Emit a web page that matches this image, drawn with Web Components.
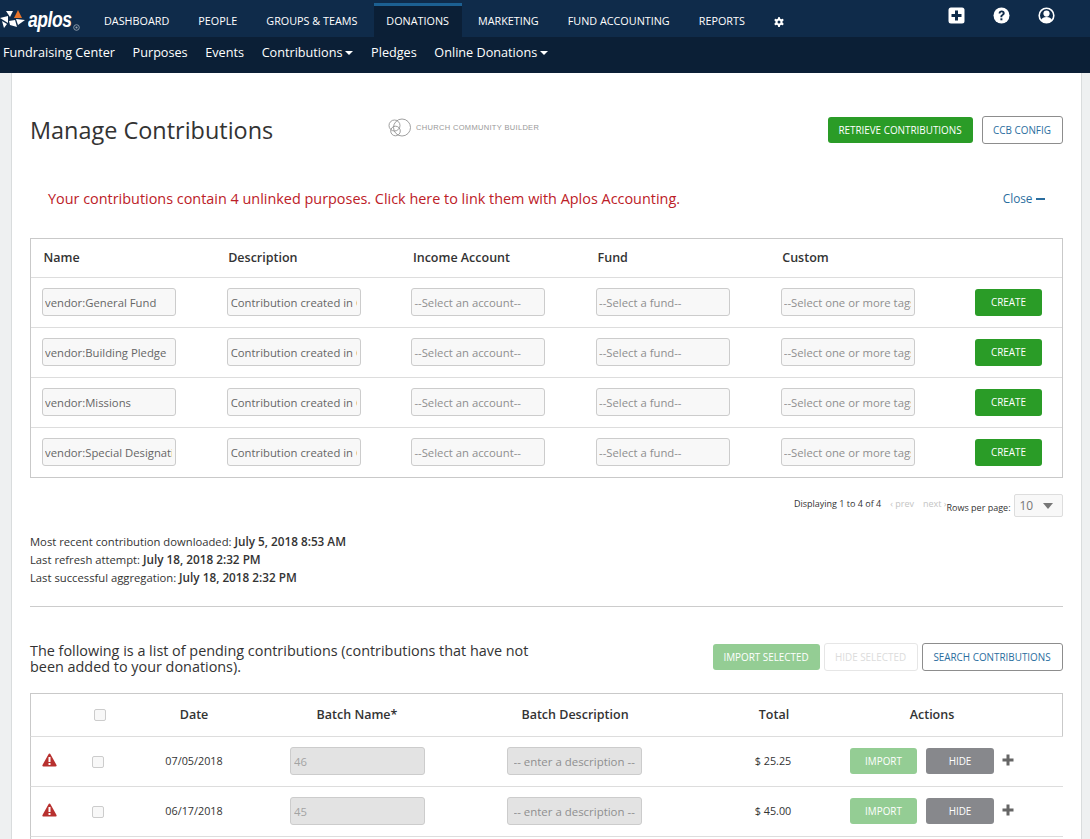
<!DOCTYPE html>
<html lang="en"><head><meta charset="utf-8"><title>Manage Contributions</title>
<style>
html,body{margin:0;padding:0;background:#eef0f1;font-family:"Open Sans",sans-serif;color:#333;height:839px;overflow:hidden}
</style></head><body>
<top-nav></top-nav>
<sub-nav></sub-nav>
<page-card>
  <page-header></page-header>
  <link-alert></link-alert>
  <purpose-table></purpose-table>
  <table-pager></table-pager>
  <sync-info></sync-info>
  <pending-section></pending-section>
</page-card>
<script>
const def=(name,html)=>customElements.define(name,class extends HTMLElement{
  constructor(){super();this.attachShadow({mode:'open'});if(typeof html!=='function')this.shadowRoot.innerHTML=html;}
  connectedCallback(){ if(typeof html==='function'){this.shadowRoot.innerHTML=html(this);} }
});
const attr=(e,n,d='')=>e.getAttribute(n)??d;

def('ui-btn',`<style>
:host{display:inline-flex;box-sizing:border-box;align-items:center;justify-content:center;padding-top:1px;font:400 9.9px/1 "Open Sans",sans-serif;border-radius:3px;white-space:nowrap;text-transform:uppercase}
:host([kind=green]){background:#2a9c27;color:#fff}
:host([kind=pale]){background:#94cd94;color:#fff}
:host([kind=gray]){background:#87888c;color:#fff}
:host([kind=outline]){background:#fff;color:#2a6d9e;border:1px solid #8d8d8d}
:host([kind=ghost]){background:#fff;color:#dcdcdc;border:1px solid #e6e6e6}
</style><slot></slot>`);

def('ui-field',`<style>
:host{display:block;box-sizing:border-box;width:134px;height:28px;border:1px solid #ccc;border-radius:3px;background:#f8f8f8;padding:1px 3px 0 2px;font:400 11.3px/25px "Open Sans",sans-serif;color:#666}
:host([muted]){color:#8f8f8f}
:host([off]){background:#e3e3e3;color:#a3a3a3;padding-left:3px}
div{overflow:hidden;white-space:nowrap}
</style><div><slot></slot></div>`);

def('nav-item',`<style>
:host{display:flex;align-items:center;height:37px;padding:6px 14.5px 0;box-sizing:border-box;font:400 10.8px/1 "Open Sans",sans-serif;color:#fff;text-transform:uppercase;white-space:nowrap}
:host([active]){background:#0b1f36;box-shadow:inset 0 3px 0 #1c6092;margin:3px 1.5px 0 2.5px;height:34px;padding:3px 13px 0 12px}
</style><slot></slot>`);

def('top-nav',`<style>
:host{display:flex;height:37px;background:#0f2b4a;align-items:flex-start;position:relative}
.logo{display:flex;align-items:flex-start;width:89.5px;height:37px;flex:none;color:#fff;position:relative}
.logo>svg:first-child{margin-top:9px;flex:none}
.word{display:inline-block;font:italic 700 22px/1 "Liberation Sans",sans-serif;letter-spacing:-.6px;margin-left:3px;margin-top:9px;transform:scaleX(.8);transform-origin:0 0}
.r{position:absolute;left:73px;top:24px}
.gear{display:flex;align-items:center;height:37px;padding-top:6px;box-sizing:border-box;margin-left:15px}
.right{margin-left:auto;display:flex;gap:28px;padding:7px 35px 0 0}
svg{display:block}
</style>
<div class="logo">
<svg width="25" height="20" viewBox="0 0 25 20">
<path d="M6 2h7l-3 6z" fill="#fff"/><path d="M18 1l4 8h-8z" fill="#e8742a"/><path d="M0 9l8-2v7z" fill="#fff"/><path d="M16 10l9 1-7 5z" fill="#fff"/><path d="M9 12l6-1 2 7-7-2z" fill="#fff"/><path d="M2 12l5 3-3 4z" fill="#fff"/>
</svg>
<span class="word">aplos</span>
<svg class="r" width="7" height="7" viewBox="0 0 8 8"><circle cx="4" cy="4" r="3.2" fill="none" stroke="#9aa6b3" stroke-width="1"/><circle cx="4" cy="4" r="1.2" fill="#9aa6b3"/></svg>
</div>
<nav-item>Dashboard</nav-item><nav-item>People</nav-item><nav-item>Groups &amp; Teams</nav-item><nav-item active>Donations</nav-item><nav-item>Marketing</nav-item><nav-item>Fund Accounting</nav-item><nav-item>Reports</nav-item>
<span class="gear"><svg width="10" height="10" viewBox="0 0 10 10"><g fill="#fff"><circle cx="5" cy="5" r="3.6"/><rect x="4" y="0" width="2" height="10" rx=".4"/><rect x="4" y="0" width="2" height="10" rx=".4" transform="rotate(60 5 5)"/><rect x="4" y="0" width="2" height="10" rx=".4" transform="rotate(120 5 5)"/></g><circle cx="5" cy="5" r="1.5" fill="#0f2b4a"/></svg></span>
<div class="right">
<svg width="17" height="17" viewBox="0 0 17 17"><rect x=".5" y=".5" width="16" height="16" rx="2.5" fill="#fff"/><path d="M7 3.5h3V7h3.5v3H10v3.5H7V10H3.5V7H7z" fill="#0f2b4a"/></svg>
<svg width="17" height="17" viewBox="0 0 17 17"><circle cx="8.5" cy="8.5" r="8" fill="#fff"/><path d="M5.6 6.4C5.8 4.6 7 3.6 8.7 3.6c1.8 0 3 1.1 3 2.6 0 1.3-.8 1.9-1.6 2.4-.6.4-.8.7-.8 1.3v.3H7.4v-.5c0-1.1.5-1.7 1.3-2.2.6-.4 1-.7 1-1.3 0-.6-.4-1-1.1-1-.7 0-1.1.4-1.2 1.2z" fill="#0f2b4a"/><rect x="7.4" y="11.3" width="2" height="2" fill="#0f2b4a"/></svg>
<svg width="17" height="17" viewBox="0 0 17 17"><circle cx="8.5" cy="8.5" r="7.3" fill="#0f2b4a" stroke="#fff" stroke-width="1.6"/><circle cx="8.5" cy="6.6" r="3.1" fill="#fff"/><path d="M3 13.2c.8-2.4 2.8-3.2 5.5-3.2s4.7.8 5.5 3.2c-1.3 1.6-3.3 2.6-5.5 2.6S4.3 14.8 3 13.2z" fill="#fff"/></svg>
</div>`);

def('sub-item',`<style>
:host{font:400 12.66px/30px "Open Sans",sans-serif;color:#fff;white-space:nowrap;display:inline-flex;align-items:center;height:30px}
:host([caret])::after{content:"";margin-left:3px;margin-top:1px;border-top:4px solid #fff;border-left:4px solid transparent;border-right:4px solid transparent}
</style><slot></slot>`);

def('sub-nav',`<style>
:host{display:flex;height:36px;background:#0b1f36;gap:17.6px;padding-left:3px;box-sizing:border-box}
</style>
<sub-item>Fundraising Center</sub-item><sub-item>Purposes</sub-item><sub-item>Events</sub-item><sub-item caret>Contributions</sub-item><sub-item>Pledges</sub-item><sub-item caret>Online Donations</sub-item>`);

def('page-card',`<style>
:host{display:block;box-sizing:border-box;margin:0 8.5px 0 11px;height:766px;overflow:hidden;background:#fff;border-left:1px solid #d9dcdd;border-right:1px solid #d9dcdd;padding:28px 18px 0}
</style><slot></slot>`);

def('page-header',`<style>
:host{display:flex;align-items:center;height:58px;position:relative}
h1{font:400 23.45px/1 "Open Sans",sans-serif;color:#333;margin:0;width:358px;flex:none;position:relative;top:1px}
.ccb{display:flex;align-items:center;gap:4px;font:400 7.5px/1 "Liberation Sans",sans-serif;color:#999;letter-spacing:.33px;text-transform:uppercase;margin-top:-4px;white-space:nowrap}
.btns{margin-left:auto;display:flex;align-items:center;gap:9px}
</style>
<h1>Manage Contributions</h1>
<div class="ccb"><svg width="24" height="20" viewBox="0 0 24 20" fill="none" stroke="#888" stroke-width=".8"><circle cx="6.5" cy="7.5" r="5.5"/><circle cx="14" cy="9.5" r="8.5"/><circle cx="7.5" cy="13" r="4.8"/></svg>Church Community Builder</div>
<div class="btns"><ui-btn kind="green" style="width:145px;height:26px">Retrieve Contributions</ui-btn><ui-btn kind="outline" style="width:81px;height:28px">CCB Config</ui-btn></div>`);

def('link-alert',`<style>
:host{display:flex;align-items:center;justify-content:space-between;height:38px;margin-top:21px;padding:0 18px;font:400 14.42px/1 "Open Sans",sans-serif;color:#bc2027}
.close{font-size:11.8px;color:#2a6d9e;display:flex;align-items:center;gap:3px}
.close i{display:block;width:9px;height:2.5px;background:#2a6d9e}
</style>
<span>Your contributions contain 4 unlinked purposes. Click here to link them with Aplos Accounting.</span><span class="close">Close<i></i></span>`);

def('purpose-row',e=>`<style>
:host{display:grid;grid-template-columns:repeat(5,184.7px) 1fr;height:50px;align-items:center;border-top:1px solid #ddd;box-sizing:border-box;padding-left:11px}
ui-field{margin-bottom:2px}
ui-btn{width:67px;height:27px;margin-left:9.5px}
</style>
<ui-field>${attr(e,'name')}</ui-field>
<ui-field style="padding-left:3px">Contribution created in CCB</ui-field>
<ui-field muted>--Select an account--</ui-field>
<ui-field muted>--Select a fund--</ui-field>
<ui-field muted>--Select one or more tags--</ui-field>
<ui-btn kind="green">Create</ui-btn>`);

def('purpose-table',`<style>
:host{display:block;border:1px solid #c9c9c9;margin-top:20px;box-sizing:border-box;height:240px}
.h{display:grid;grid-template-columns:repeat(5,184.7px) 1fr;height:38px;align-items:center;padding-left:12.5px;font:600 12.5px/1 "Open Sans",sans-serif;color:#333}
</style>
<div class="h"><span>Name</span><span>Description</span><span>Income Account</span><span>Fund</span><span>Custom</span><span></span></div>
<purpose-row name="vendor:General Fund"></purpose-row>
<purpose-row name="vendor:Building Pledge"></purpose-row>
<purpose-row name="vendor:Missions"></purpose-row>
<purpose-row name="vendor:Special Designation"></purpose-row>`);

def('table-pager',`<style>
:host{display:flex;justify-content:flex-end;align-items:flex-start;height:24px;margin-top:16px;font:400 9px/1 "Open Sans",sans-serif;color:#333;white-space:nowrap}
.t{margin-top:5px}
.p{margin:5px 0 0 9px;color:#c4c4c4}
.r{margin:9px 3px 0 0}
.s{box-sizing:border-box;width:49px;height:23px;border:1px solid #ddd;border-radius:2px;background:#f8f8f8;display:flex;align-items:center;justify-content:space-between;padding:0 9px 0 5px;font-size:12px;color:#777}
.s i{border-top:6px solid #777;border-left:5.5px solid transparent;border-right:5.5px solid transparent}
</style>
<span class="t">Displaying 1 to 4 of 4</span><span class="p">‹ prev</span><span class="p" style="margin-right:0">next ›</span><span class="r">Rows per page:</span><span class="s">10<i></i></span>`);

def('sync-info',`<style>
:host{display:block;margin-top:14.5px;font:400 11.26px/18px "Open Sans",sans-serif;color:#333;padding-bottom:19.5px;border-bottom:1px solid #ccc}
div{height:18px}
b{font-weight:600;font-size:11.75px;line-height:1}
</style>
<div>Most recent contribution downloaded: <b>July 5, 2018 8:53 AM</b></div>
<div>Last refresh attempt: <b>July 18, 2018 2:32 PM</b></div>
<div>Last successful aggregation: <b>July 18, 2018 2:32 PM</b></div>`);

def('pending-row',e=>`<style>
:host{display:grid;grid-template-columns:61px 1fr;height:50px;box-sizing:border-box;border-top:1px solid #ddd;border-left:1px solid #c9c9c9;align-items:center;position:relative}
.g{display:grid;grid-template-columns:12px 186px 135px 82px 135px 208px 67px 9px 68px 8px 12px;align-items:center;font:400 10.8px/1 "Open Sans",sans-serif;color:#333}
.warn{position:absolute;left:11px;top:16px}
.c{box-sizing:border-box;width:12px;height:12px;border:1px solid #ccc;border-radius:2px;background:#f8f8f8}
.d{text-align:center;width:180px}
.t{text-align:center;padding-left:54px;white-space:nowrap}
ui-btn{height:26px;margin-bottom:1px}
ui-field{margin-bottom:2px}
</style>
<svg class="warn" width="15" height="14" viewBox="0 0 15 14"><path d="M7.5.5c.5 0 .8.3 1 .7l6 10.8c.4.8 0 1.5-.9 1.5H1.4C.5 13.5.1 12.8.5 12l6-10.8c.2-.4.5-.7 1-.7z" fill="#b8312f"/><rect x="6.5" y="4" width="2" height="5" fill="#fff"/><rect x="6.5" y="10" width="2" height="2" fill="#fff"/></svg>
<span></span>
<div class="g">
<span class="c"></span>
<span class="d">${attr(e,'date')}</span>
<ui-field off style="width:135px">${attr(e,'batch')}</ui-field>
<span></span>
<ui-field muted style="width:135px;background:#e3e3e3;padding-left:5.5px;font-size:11.45px">-- enter a description --</ui-field>
<span class="t">$ ${attr(e,'total')}</span>
<ui-btn kind="pale">Import</ui-btn>
<span></span>
<ui-btn kind="gray">Hide</ui-btn>
<span></span>
<svg width="12" height="12" viewBox="0 0 12 12" style="margin-top:-3px"><path d="M4.5.5h3v4h4v3h-4v4h-3v-4h-4v-3h4z" fill="#666"/></svg>
</div>`);

def('pending-section',`<style>
:host{display:block}
.top{display:flex;justify-content:space-between;align-items:flex-start;margin-top:36px;height:50px}
p{margin:0;width:510px;font:400 14.4px/16px "Open Sans",sans-serif;color:#333}
.btns{display:flex;gap:4px;align-items:center;height:28px}
.tbl{border-top:1px solid #c9c9c9}
.h{height:42px;border-left:1px solid #c9c9c9;border-right:1px solid #c9c9c9;display:grid;grid-template-columns:63px 12px 176px 150px 286px 112px 204px 1fr;align-items:center;font:600 12.5px/1 "Open Sans",sans-serif;color:#333;text-align:center}
.c{box-sizing:border-box;width:12px;height:12px;border:1px solid #ccc;border-radius:2px;background:#f8f8f8}
.x{white-space:nowrap;justify-self:center}
.end{height:3px;border-top:1px solid #ddd;border-left:1px solid #c9c9c9}
</style>
<div class="top"><p>The following is a list of pending contributions (contributions that have not been added to your donations).</p>
<div class="btns"><ui-btn kind="pale" style="width:107px;height:26px">Import Selected</ui-btn><ui-btn kind="ghost" style="width:94px;height:28px">Hide Selected</ui-btn><ui-btn kind="outline" style="width:141px;height:28px">Search Contributions</ui-btn></div></div>
<div class="tbl">
<div class="h"><span></span><span class="c"></span><span class="x">Date</span><span class="x">Batch Name*</span><span class="x">Batch Description</span><span class="x">Total</span><span class="x">Actions</span><span></span></div>
<pending-row date="07/05/2018" batch="46" total="25.25"></pending-row>
<pending-row date="06/17/2018" batch="45" total="45.00"></pending-row>
<div class="end"></div>
</div>`);
</script>
</body></html>
